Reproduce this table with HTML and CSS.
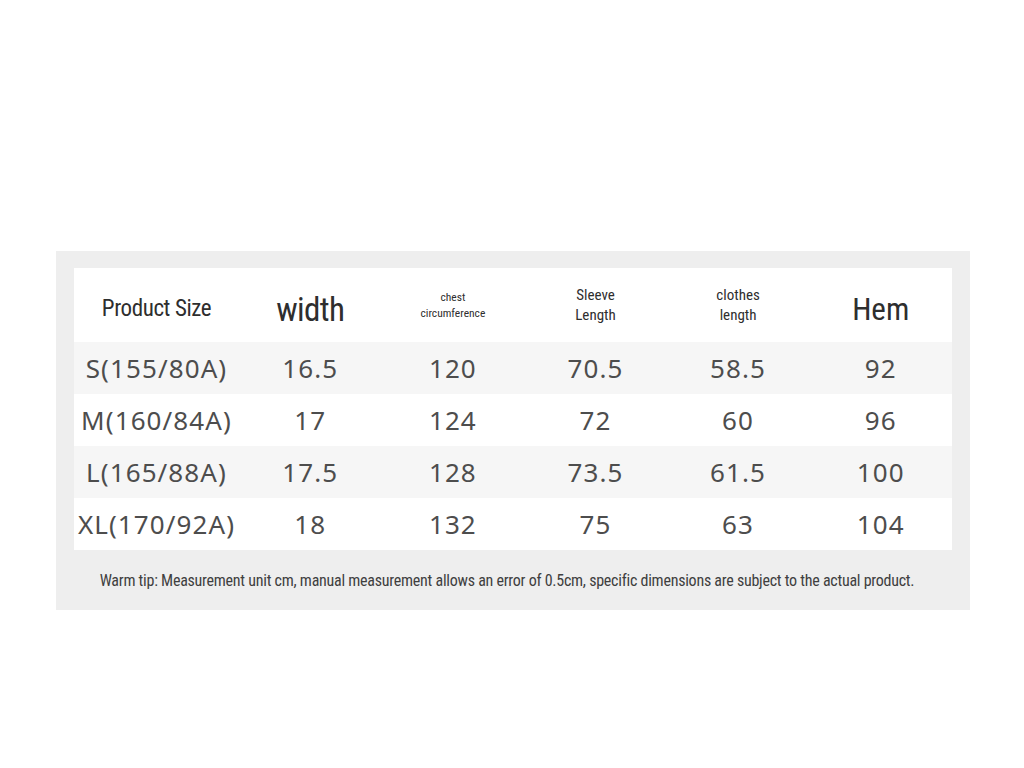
FILE: index.html
```html
<!DOCTYPE html>
<html lang="en">
<head>
<meta charset="utf-8">
<title>Size Chart</title>
<link rel="stylesheet" href="styles.css">
</head>
<body>
<div class="panel">
  <div class="table">
    <div class="row head">
      <div class="cell h-product">Product Size</div>
      <div class="cell h-big">width</div>
      <div class="cell h-tiny">chest<br>circumference</div>
      <div class="cell h-small">Sleeve<br>Length</div>
      <div class="cell h-small">clothes<br>length</div>
      <div class="cell h-big h-hem">Hem</div>
    </div>
    <div class="row shade">
      <div class="cell">S(155/80A)</div><div class="cell">16.5</div><div class="cell">120</div><div class="cell">70.5</div><div class="cell">58.5</div><div class="cell">92</div>
    </div>
    <div class="row">
      <div class="cell">M(160/84A)</div><div class="cell">17</div><div class="cell">124</div><div class="cell">72</div><div class="cell">60</div><div class="cell">96</div>
    </div>
    <div class="row shade">
      <div class="cell">L(165/88A)</div><div class="cell">17.5</div><div class="cell">128</div><div class="cell">73.5</div><div class="cell">61.5</div><div class="cell">100</div>
    </div>
    <div class="row">
      <div class="cell">XL(170/92A)</div><div class="cell">18</div><div class="cell">132</div><div class="cell">75</div><div class="cell">63</div><div class="cell">104</div>
    </div>
  </div>
  <p class="tip">Warm tip: Measurement unit cm, manual measurement allows an error of 0.5cm, specific dimensions are subject to the actual product.</p>
</div>
</body>
</html>
```
FILE: styles.css
```css
html, body {
  margin: 0;
  padding: 0;
  background: #ffffff;
}
body {
  padding-top: 251px;
  padding-left: 56px;
}
.panel {
  width: 914px;
  height: 359px;
  box-sizing: border-box;
  background: #eeeeee;
  padding: 17px 18px 0 18px;
}
.table {
  background: #ffffff;
}
.row {
  display: grid;
  grid-template-columns: 165px repeat(5, 1fr);
  height: 52px;
  align-items: center;
  font-family: "Noto Sans", "DejaVu Sans", sans-serif;
  font-size: 26px;
  color: #4d4d4d;
  letter-spacing: 1.1px;
}
.row.shade {
  background: #f6f6f6;
}
.cell {
  text-align: center;
  line-height: 1;
}
.row.head {
  height: 74px;
  font-family: "Roboto Condensed", "DejaVu Sans Condensed", sans-serif;
  font-weight: 400;
  color: #2e2e2e;
  letter-spacing: 0;
}
.h-product {
  font-size: 23px;
  letter-spacing: -0.4px;
  padding-top: 6px;
}
.h-big {
  font-size: 33px;
  letter-spacing: -0.6px;
  padding-top: 8px;
}
.h-hem {
  font-size: 31px;
  letter-spacing: 0;
}
.h-tiny {
  font-size: 11.5px;
  line-height: 16px;
}
.h-small {
  font-size: 15px;
  line-height: 20px;
}
.tip {
  margin: 0;
  height: 60px;
  padding-right: 12px;
  line-height: 62px;
  text-align: center;
  font-family: "Roboto Condensed", "DejaVu Sans Condensed", sans-serif;
  font-weight: 400;
  font-size: 16px;
  letter-spacing: -0.25px;
  color: #3f3f3f;
}
```
